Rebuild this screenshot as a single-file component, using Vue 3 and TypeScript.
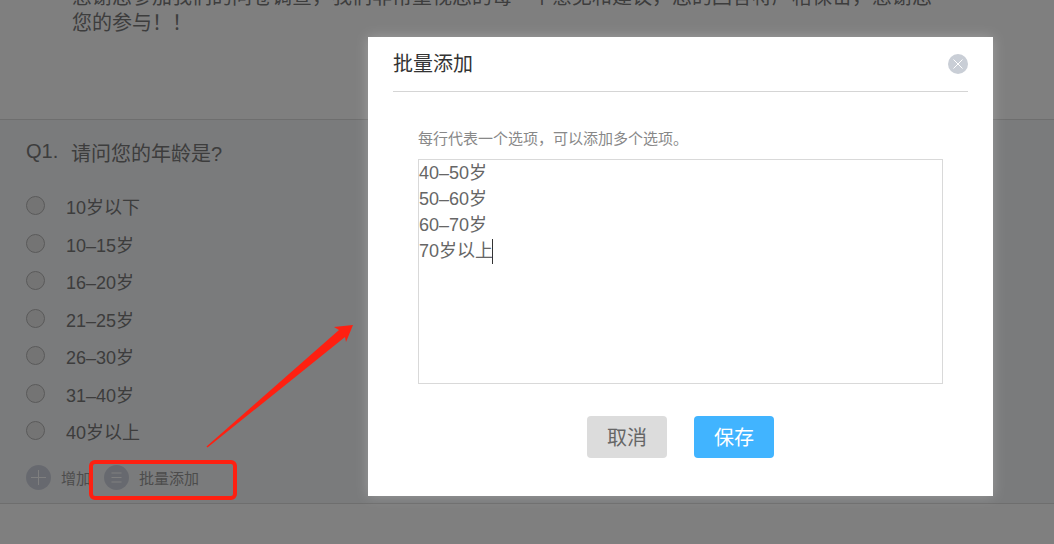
<script setup lang="ts">
const options: string[] = ['10岁以下', '10–15岁', '16–20岁', '21–25岁', '26–30岁', '31–40岁', '40岁以上']
</script>

<template>
  <div class="page">
    <section class="intro">
      <p class="intro-text">感谢您参加我们的问卷调查，我们非常重视您的每一个意见和建议，您的回答将严格保密，感谢您<br />您的参与！！</p>
    </section>
    <section class="question">
      <div class="q-title"><span class="q-no">Q1.</span><span class="q-text">请问您的年龄是?</span></div>
      <ul class="opts">
        <li v-for="o in options" :key="o" class="opt"><i class="radio"></i><span class="opt-label">{{ o }}</span></li>
      </ul>
      <div class="actions">
        <span class="act">
          <svg class="act-icon" viewBox="0 0 25 25"><circle cx="12.5" cy="12.5" r="12.5" fill="#cfd3df" /><path d="M12.5 5v15M5 12.5h15" stroke="#fff" stroke-width="1" /></svg>
          <span class="act-label">增加</span>
        </span>
        <span class="act act-batch">
          <svg class="act-icon" viewBox="0 0 25 25"><circle cx="12.5" cy="12.5" r="12.5" fill="#cfd3df" /><path d="M7.5 8h10M7.5 12.5h10M7.5 17h10" stroke="#fff" stroke-width="1" /></svg>
          <span class="act-label">批量添加</span>
        </span>
      </div>
    </section>

    <div class="mask"></div>

    <svg class="annot" viewBox="0 0 1054 544">
      <path d="M206.5 446.5 L339 330 L334 327 L353 325 L346 342 L345 337 L207.5 447.5 Z" fill="#fe2011" />
    </svg>
    <div class="red-box"></div>

    <div class="dialog">
      <header class="d-head">
        <h2>批量添加</h2>
        <svg class="close" viewBox="0 0 20 20"><circle cx="10" cy="10" r="10" fill="#c9ced6" /><path d="M5.5 5.5l9 9M14.5 5.5l-9 9" stroke="#fff" stroke-width="1" /></svg>
      </header>
      <div class="d-body">
        <p class="hint">每行代表一个选项，可以添加多个选项。</p>
        <div class="area">
          <div>40–50岁</div>
          <div>50–60岁</div>
          <div>60–70岁</div>
          <div>70岁以上<i class="caret"></i></div>
        </div>
      </div>
      <footer class="d-foot">
        <button class="btn cancel">取消</button>
        <button class="btn save">保存</button>
      </footer>
    </div>
  </div>
</template>

<style scoped>
.page {
  position: relative;
  width: 1054px;
  height: 544px;
  overflow: hidden;
  background: #fff;
  color: #7a7a7a;
  font-family: "Liberation Sans", "Noto Sans CJK SC", sans-serif;
}
.intro {
  height: 119px;
  border-bottom: 1px solid #ddd;
  box-sizing: content-box;
  overflow: hidden;
}
.intro-text {
  margin: -16px 0 0;
  padding-left: 72px;
  font-size: 20px;
  line-height: 26px;
  white-space: nowrap;
}
.question {
  height: 384px;
  border-bottom: 1px solid #ddd;
  padding: 21px 0 0 26px;
  box-sizing: border-box;
  background: #f5f6f8;
}
.q-title {
  display: flex;
  align-items: flex-start;
  height: 26px;
  font-size: 20px;
  line-height: 24px;
}
.q-no { width: 45px; margin-top: -2px; }
.q-text { margin-top: 1px; }
.opts {
  list-style: none;
  margin: 20px 0 0;
  padding: 0;
}
.opt {
  display: flex;
  align-items: center;
  height: 37.5px;
  font-size: 18px;
}
.opt-label { padding-top: 1px; }
.radio {
  width: 19px;
  height: 19px;
  box-sizing: border-box;
  border: 1px solid #b4b4b4;
  border-radius: 50%;
  background: #e8e8e8;
  margin-right: 21px;
}
.actions {
  display: flex;
  align-items: center;
  margin-top: 15px;
  font-size: 15px;
  color: #999;
}
.act { display: flex; align-items: center; }
.act-icon { width: 25px; height: 25px; margin-right: 10px; flex: none; }
.act-label { padding-top: 1px; }
.act-batch { margin-left: 13px; }
.mask {
  position: absolute;
  inset: 0;
  background: rgba(0, 0, 0, 0.5);
}
.annot {
  position: absolute;
  inset: 0;
  width: 1054px;
  height: 544px;
}
.red-box {
  position: absolute;
  left: 89px;
  top: 460px;
  width: 148px;
  height: 40px;
  box-sizing: border-box;
  border: 4px solid #fe2011;
  border-radius: 6px;
}
.dialog {
  position: absolute;
  left: 368px;
  top: 37px;
  width: 625px;
  height: 459px;
  background: #fff;
  box-shadow: 0 0 12px rgba(255, 255, 255, 0.25);
  display: flex;
  flex-direction: column;
}
.d-head {
  display: flex;
  align-items: center;
  justify-content: space-between;
  height: 54px;
  margin: 0 25px;
  border-bottom: 1px solid #d5d5d5;
}
.d-head h2 {
  margin: 0 0 4px;
  font-size: 20px;
  font-weight: 400;
  color: #333;
}
.close { width: 20px; height: 20px; }
.d-body { padding: 37px 50px 0; }
.hint {
  margin: 0;
  font-size: 15px;
  line-height: 20px;
  color: #888;
}
.area {
  margin-top: 10px;
  width: 525px;
  height: 225px;
  box-sizing: border-box;
  border: 1px solid #d9d9d9;
  font-size: 18px;
  line-height: 26px;
  color: #666;
}
.area div { display: flex; align-items: center; }
.caret {
  width: 1px;
  height: 25px;
  margin-left: -1px;
  background: #333;
}
.d-foot {
  display: flex;
  justify-content: center;
  gap: 27px;
  margin-top: 32px;
}
.btn {
  width: 80px;
  height: 42px;
  border: 0;
  border-radius: 4px;
  padding: 0 0 2px;
  font: inherit;
  font-size: 20px;
}
.cancel { background: #dcdcdc; color: #666; }
.save { background: #41b4ff; color: #fff; }
</style>
